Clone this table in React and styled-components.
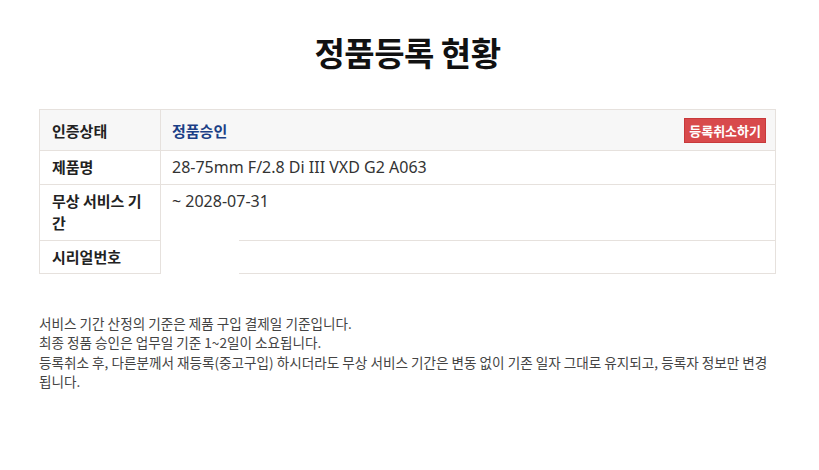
import React from "react";
import styled, { createGlobalStyle } from "styled-components";

const Global = createGlobalStyle`
  html, body { margin: 0; padding: 0; background: #fff; }
  body { font-family: "Noto Sans", "Noto Sans CJK KR", sans-serif; }
`;

const Page = styled.div`
  width: 737px;
  margin-left: 39px;
  padding-top: 32px;
`;

const Title = styled.h1`
  margin: 0;
  text-align: center;
  font-family: "Noto Sans CJK KR", sans-serif;
  font-size: 33px;
  font-weight: 700;
  line-height: 40px;
  color: #111;
  letter-spacing: -0.5px;
`;

const Table = styled.div`
  margin-top: 37px;
  border: 1px solid #e6e1dd;
  border-bottom: none;
  display: grid;
  grid-template-columns: 121px 1fr;
`;

const Label = styled.div`
  grid-column: 1;
  padding: ${(p) => (p.$head ? "8px 12px 7px" : p.$last ? "5px 12px 5px" : "5px 12px 6px")};
  font-family: "Noto Sans CJK KR", sans-serif;
  font-size: 15px;
  font-weight: 700;
  line-height: 22px;
  color: #222;
  background: ${(p) => (p.$head ? "#f7f7f7" : "#fff")};
  border-right: 1px solid #e6e1dd;
  border-bottom: 1px solid #e6e1dd;
  display: flex;
  align-items: ${(p) => (p.$top ? "flex-start" : "center")};
`;

const Value = styled.div`
  grid-column: 2;
  position: relative;
  padding: ${(p) => (p.$head ? "8px 11px 7px" : "5px 11px 6px")};
  font-family: "Noto Sans", "Noto Sans CJK KR", sans-serif;
  font-size: 16px;
  line-height: 22px;
  color: #333;
  background: ${(p) => (p.$head ? "#f7f7f7" : "#fff")};
  border-bottom: 1px solid #e6e1dd;
  display: flex;
  align-items: ${(p) => (p.$top ? "flex-start" : "center")};
  justify-content: space-between;
`;

const Status = styled.span`
  font-family: "Noto Sans CJK KR", sans-serif;
  font-size: 15px;
  font-weight: 700;
  color: #1b3f86;
`;

const CancelButton = styled.button`
  height: 25px;
  padding: 0 4px;
  margin-right: -2px;
  border: 1px solid #c8393b;
  background: #d84a4c;
  color: #fff;
  font-family: "Noto Sans CJK KR", sans-serif;
  font-size: 13px;
  font-weight: 700;
  line-height: 23px;
  cursor: pointer;
`;

const Cover = styled.span`
  position: absolute;
  left: 0;
  top: -1px;
  bottom: -1px;
  width: 78px;
  background: #fff;
`;

const Notes = styled.div`
  margin-top: 40px;
  font-family: "Noto Sans CJK KR", sans-serif;
  font-size: 13.6px;
  line-height: 19.4px;
  color: #444;
  p { margin: 0; }
`;

export default function App() {
  return (
    <>
      <Global />
      <Page>
        <Title>정품등록 현황</Title>
        <Table>
          <Label $head>인증상태</Label>
          <Value $head>
            <Status>정품승인</Status>
            <CancelButton>등록취소하기</CancelButton>
          </Value>
          <Label>제품명</Label>
          <Value>28-75mm F/2.8 Di III VXD G2 A063</Value>
          <Label $top>무상 서비스 기간</Label>
          <Value $top>~ 2028-07-31</Value>
          <Label $last>시리얼번호</Label>
          <Value>
            <Cover />
          </Value>
        </Table>
        <Notes>
          <p>서비스 기간 산정의 기준은 제품 구입 결제일 기준입니다.</p>
          <p>최종 정품 승인은 업무일 기준 1~2일이 소요됩니다.</p>
          <p>
            등록취소 후, 다른분께서 재등록(중고구입) 하시더라도 무상 서비스 기간은 변동 없이 기존 일자 그대로 유지되고, 등록자 정보만 변경 됩니다.
          </p>
        </Notes>
      </Page>
    </>
  );
}
